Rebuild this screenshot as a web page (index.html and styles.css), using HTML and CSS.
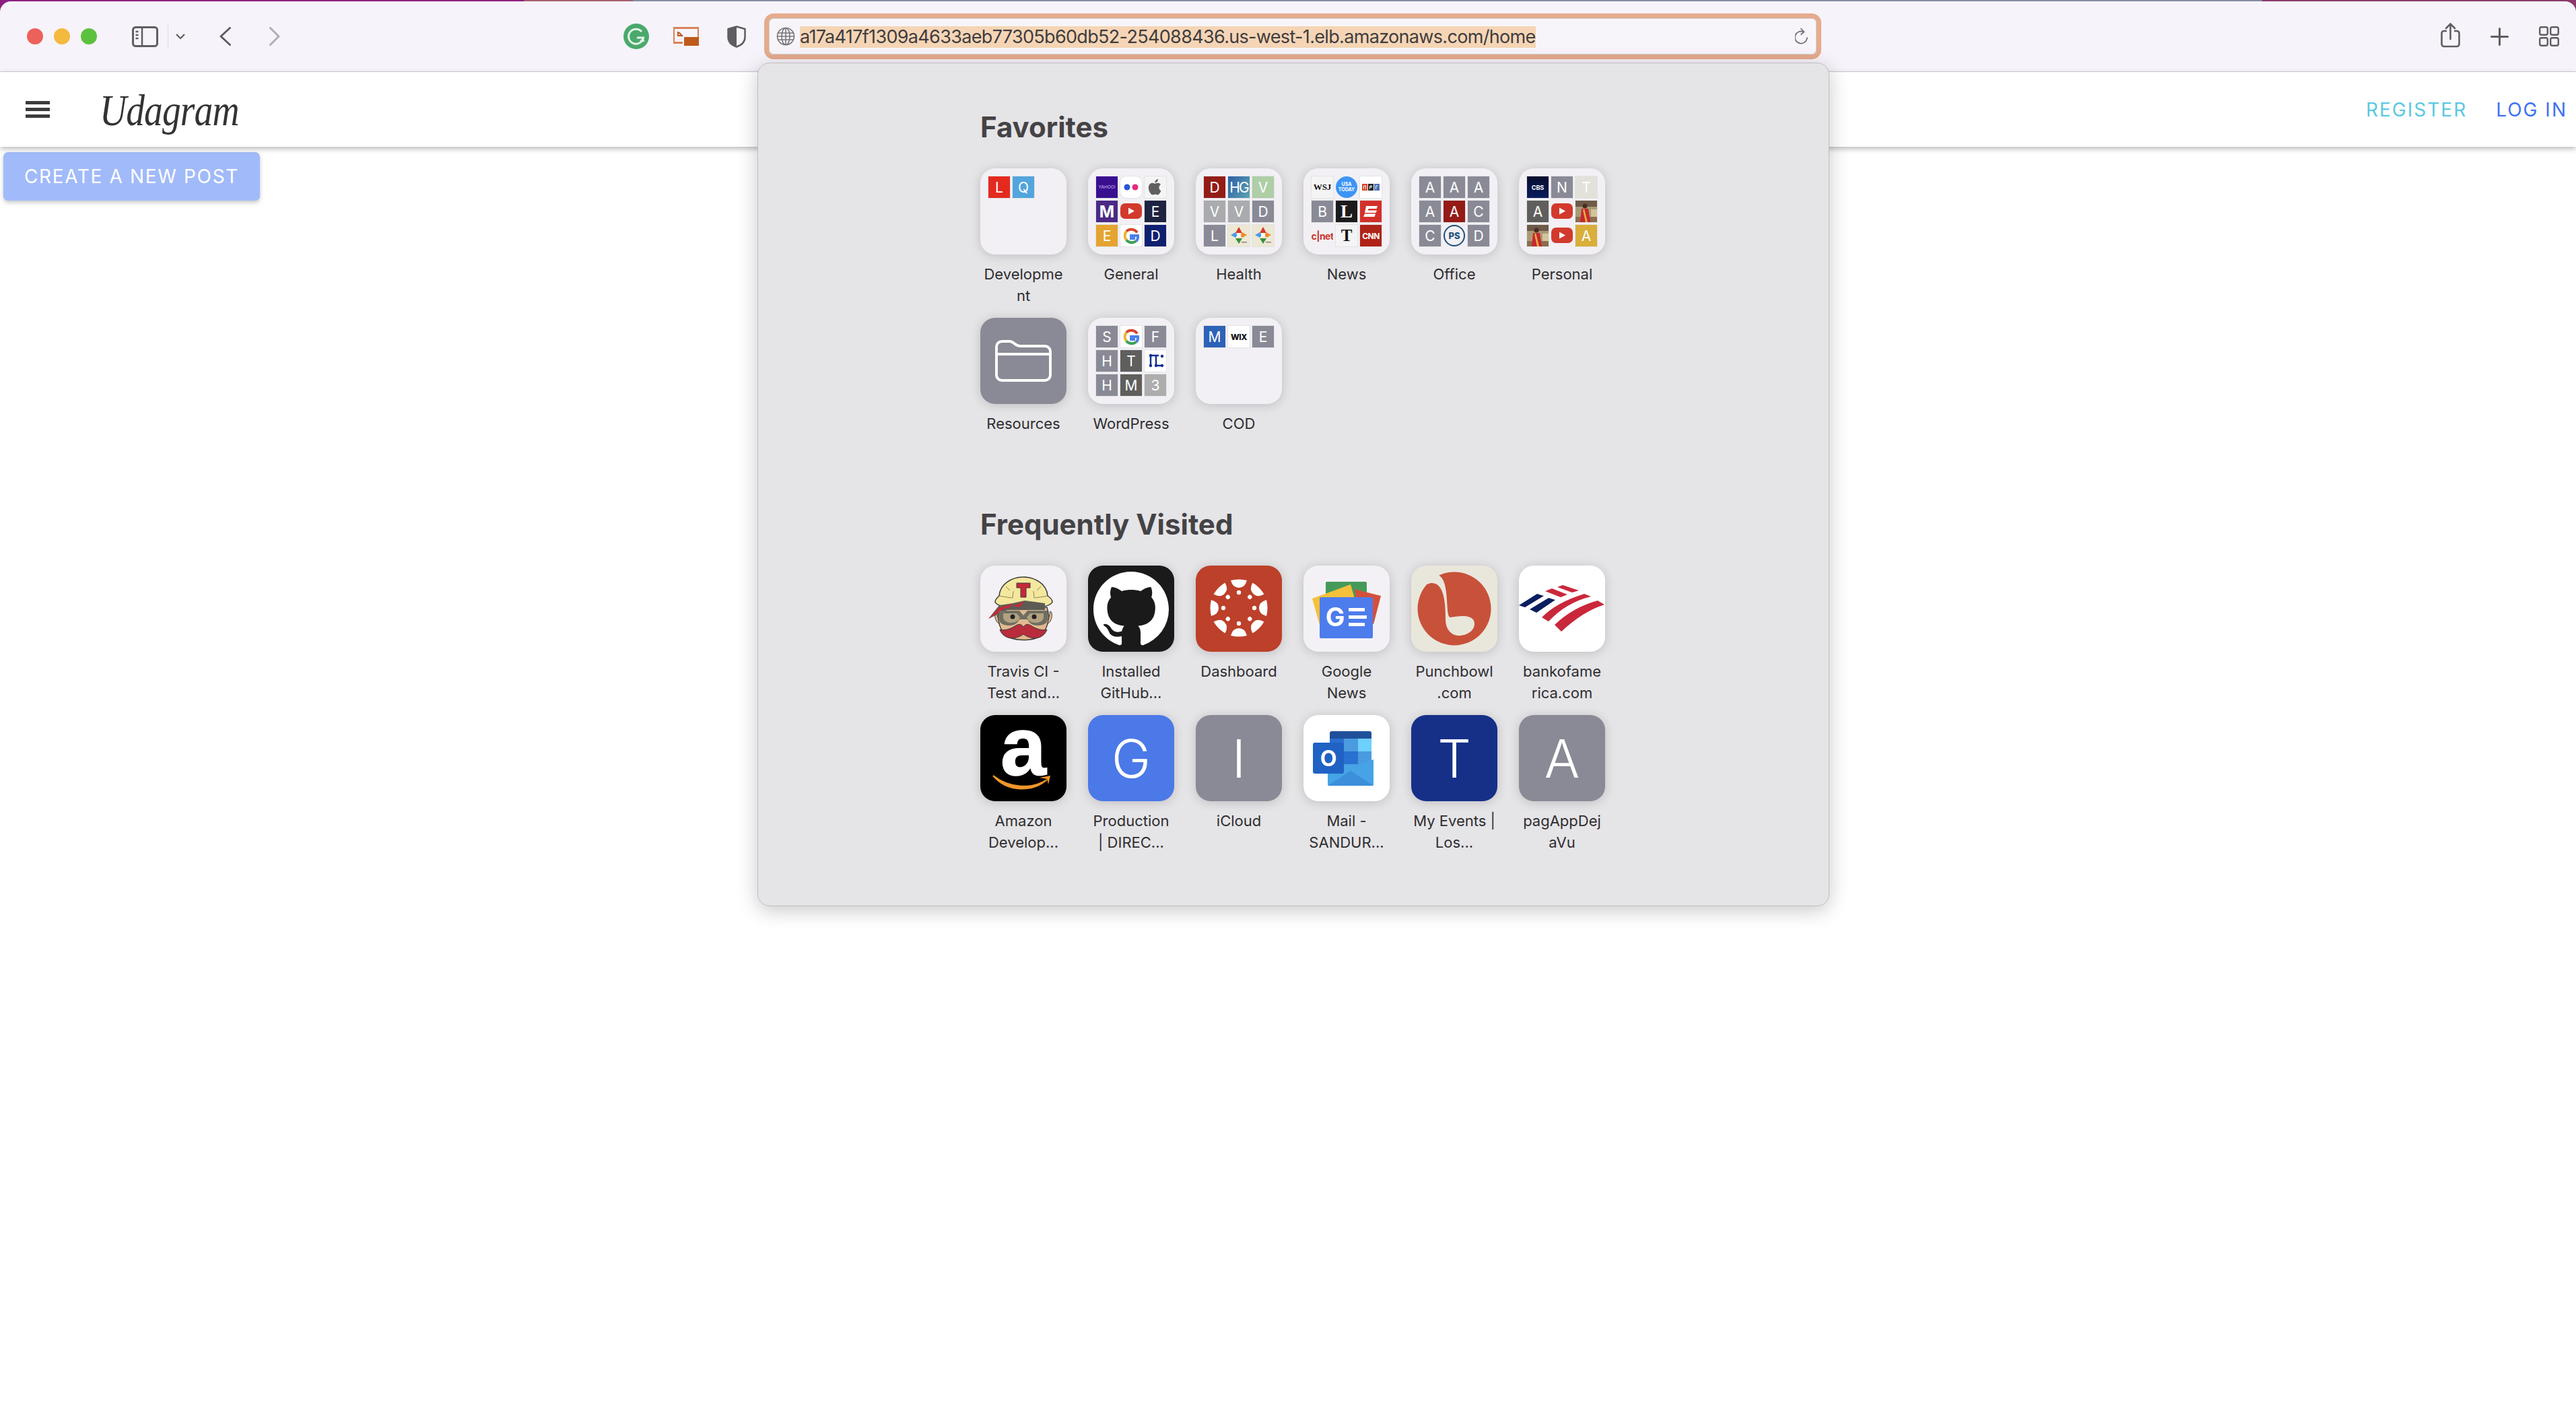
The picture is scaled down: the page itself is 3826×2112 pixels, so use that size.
FILE: index.html
```html
<!DOCTYPE html>
<html lang="en">
<head>
  <meta charset="UTF-8">
  <meta name="viewport" content="width=device-width, initial-scale=1.0">
  <title>Udagram</title>
  <link rel="stylesheet" href="styles.css">
</head>
<body>
  <!-- shared little logos -->
  <svg class="defs" aria-hidden="true">
    <symbol id="yt" viewBox="0 0 32 32"><rect y="4" width="32" height="23" rx="7" fill="#d23a2d"/><path d="M12 10.500l9 5-9 5z" fill="#fff"/></symbol>
    <symbol id="gg" viewBox="0 0 32 32">
      <path d="M25 11.500a10.500 10.500 0 0 0-16-2" fill="none" stroke="#d8432f" stroke-width="4"/>
      <path d="M9 9.500a10.500 10.500 0 0 0 0 13" fill="none" stroke="#eab32d" stroke-width="4"/>
      <path d="M9 22.500a10.500 10.500 0 0 0 14.500 1.500" fill="none" stroke="#3ba056" stroke-width="4"/>
      <path d="M23.500 24c2-1.800 3-4.500 2.500-8h-10v4h6" fill="none" stroke="#4a80ec" stroke-width="4"/>
    </symbol>
    <symbol id="dia" viewBox="0 0 32 32">
      <rect width="32" height="32" fill="#ece8d4"/>
      <path d="M16 3l5 9h-10z" fill="#d8392c"/>
      <path d="M4 15l7-4 3 4-3 4z" fill="#4b9be8"/>
      <path d="M28 15l-7-4-3 4 3 4z" fill="#ee8b2a"/>
      <path d="M11 20h10l-5 8z" fill="#3a8f3c"/>
      <circle cx="16" cy="15" r="3" fill="#fff"/>
      <rect x="20" y="25" width="8" height="1.500" fill="#888"/>
    </symbol>
    <symbol id="photo" viewBox="0 0 32 32">
      <rect width="32" height="32" fill="#a99a78"/>
      <rect width="32" height="9" fill="#6d5a48"/>
      <rect x="23" y="13" width="9" height="12" fill="#d4c49a"/>
      <rect y="24" width="32" height="8" fill="#8b6d4e"/>
      <circle cx="14" cy="8" r="3.500" fill="#4a2c20"/>
      <path d="M9 12h10l3 20h-15z" fill="#c8262d"/>
      <path d="M13 12l5 20h-3l-4-18z" fill="#e6b040"/>
    </symbol>
  </svg>

  <div class="window">
    <div class="toolbar">
      <div class="lights"><span class="light red"></span><span class="light yellow"></span><span class="light green"></span></div>
      <svg class="sidebar-icon" viewBox="0 0 39 31"><rect x="1.500" y="1.500" width="36" height="28" rx="4" fill="none" stroke="#605c62" stroke-width="3"/><path d="M15 2v27" stroke="#605c62" stroke-width="2.500"/><path d="M5.500 8h4M5.500 13h4M5.500 18h4" stroke="#605c62" stroke-width="2.500"/></svg>
      <span class="sep"></span>
      <svg class="caret" viewBox="0 0 14 8"><path d="M1 1l6 6 6-6" fill="none" stroke="#605c62" stroke-width="2.200"/></svg>
      <svg class="back" viewBox="0 0 17 28"><path d="M15.500 1.500L2 14l13.500 12.500" fill="none" stroke="#5f5b62" stroke-width="3" stroke-linecap="round" stroke-linejoin="round"/></svg>
      <svg class="forward" viewBox="0 0 16 28"><path d="M1.500 1.500L14 14 1.500 26.500" fill="none" stroke="#b0adb3" stroke-width="3" stroke-linecap="round" stroke-linejoin="round"/></svg>
      <svg class="grammarly" viewBox="0 0 38 38"><circle cx="19" cy="19" r="19" fill="#4aa96c"/><path d="M27 12a11 11 0 1 0 2.500 9H20" fill="none" stroke="#e6f4ea" stroke-width="3"/><path d="M24 26l5.500-5 2 6z" fill="#e6f4ea"/></svg>
      <svg class="pip" viewBox="0 0 38 28"><path d="M1 23V1.500h36V15" fill="none" stroke="#d9825a" stroke-width="2"/><path d="M0 0h38v3H0zM0 22h14v3H0z" fill="#d9825a"/><path d="M7 7v6h6M8 8l6 6" fill="none" stroke="#c05a1a" stroke-width="2"/><rect x="16" y="15" width="22" height="13" fill="#bf5a1c"/></svg>
      <svg class="shield" viewBox="0 0 28 33"><path d="M14 1.500L26.500 5v12c0 7-5 12-12.500 14.500C6.500 29 1.500 24 1.500 17V5z" fill="#f7f3fa" stroke="#605c62" stroke-width="2.500" stroke-linejoin="round"/><path d="M14 1.500L1.500 5v12c0 7 5 12 12.500 14.500z" fill="#605c62"/></svg>
      <div class="url">
        <svg class="globe" viewBox="0 0 28 28"><g fill="none" stroke="#77747a" stroke-width="1.600"><circle cx="14" cy="14" r="12.500"/><ellipse cx="14" cy="14" rx="6" ry="12.500"/><path d="M14 1.500v25M2.500 9h23M2.500 19h23M1.500 14h25"/></g></svg>
        <span class="url-text">a17a417f1309a4633aeb77305b60db52-254088436.us-west-1.elb.amazonaws.com/home</span>
        <svg class="reload" viewBox="0 0 20 26"><path d="M13 6.500a9 9 0 1 0 5 8" fill="none" stroke="#77747a" stroke-width="1.800"/><path d="M8.500 1l5 5.500-5 4" fill="none" stroke="#77747a" stroke-width="1.800"/></svg>
      </div>
      <div class="toolbar-right">
        <svg class="share" viewBox="0 0 29 37"><path d="M9 12H5a3.500 3.500 0 0 0-3.500 3.500v16A3.500 3.500 0 0 0 5 35h19a3.500 3.500 0 0 0 3.500-3.500v-16A3.500 3.500 0 0 0 24 12h-4" fill="none" stroke="#605c62" stroke-width="2.600"/><path d="M14.500 24V2M8 8l6.500-6.500L21 8" fill="none" stroke="#605c62" stroke-width="2.600" stroke-linecap="round"/></svg>
        <svg class="plus" viewBox="0 0 27 27"><path d="M13.500 1.500v24M1.500 13.500h24" stroke="#605c62" stroke-width="3" stroke-linecap="round"/></svg>
        <svg class="tabs" viewBox="0 0 30 30"><g fill="none" stroke="#605c62" stroke-width="2.400"><rect x="1.200" y="1.200" width="11.600" height="11.600" rx="2.500"/><rect x="17.200" y="1.200" width="11.600" height="11.600" rx="2.500"/><rect x="1.200" y="17.200" width="11.600" height="11.600" rx="2.500"/><rect x="17.200" y="17.200" width="11.600" height="11.600" rx="2.500"/></g></svg>
      </div>
    </div>
  </div>

  <!-- site header -->
  <nav class="site-nav">
    <div class="burger"><span></span><span></span><span></span></div>
    <a class="brand">Udagram</a>
    <div class="nav-links">
      <a class="register">REGISTER</a>
      <a class="login">LOG IN</a>
    </div>
  </nav>
  <button class="create-btn">CREATE A NEW POST</button>

  <!-- favorites dropdown -->
  <div class="popover">
    <h2>Favorites</h2>
    <div class="grid">
      <div class="item">
        <div class="tile folder">
          <span class="mini c-red">L</span><span class="mini c-sky">Q</span>
        </div>
        <p>Developme<br>nt</p>
      </div>
      <div class="item">
        <div class="tile folder">
          <span class="mini c-yahoo yahoo">YAHOO!</span>
          <span class="mini c-white round"><svg viewBox="0 0 32 32"><circle cx="10" cy="16" r="4.500" fill="#2a56d6"/><circle cx="22" cy="16" r="4.500" fill="#e8287f"/></svg></span>
          <span class="mini c-pale"><svg viewBox="0 0 32 32"><path d="M21.500 16.500c0-3 2.400-4.300 2.500-4.400-1.400-2-3.500-2.300-4.200-2.300-1.800-.2-3.500 1-4.400 1-.9 0-2.300-1-3.800-1-2 0-3.800 1.100-4.800 2.900-2 3.600-.5 8.800 1.500 11.700 1 1.400 2.100 3 3.600 2.900 1.400-.1 2-.9 3.700-.9s2.200.9 3.700.9c1.600 0 2.500-1.400 3.500-2.800 1.100-1.600 1.500-3.200 1.600-3.300-.1 0-2.900-1.100-2.900-4.700zM18.700 7.800c.8-1 1.300-2.300 1.200-3.700-1.100 0-2.500.8-3.300 1.700-.7.800-1.400 2.200-1.200 3.500 1.300.1 2.500-.6 3.300-1.500z" fill="#606060"/></svg></span>
          <span class="mini c-violet bold">M</span>
          <span class="mini plain"><svg viewBox="0 0 32 32"><use href="#yt"/></svg></span>
          <span class="mini c-ink">E</span>
          <span class="mini c-amber">E</span>
          <span class="mini c-white"><svg viewBox="0 0 32 32"><use href="#gg"/></svg></span>
          <span class="mini c-navy">D</span>
        </div>
        <p>General</p>
      </div>
      <div class="item">
        <div class="tile folder">
          <span class="mini c-crimson">D</span>
          <span class="mini c-hg hg">HG</span>
          <span class="mini c-sage">V</span>
          <span class="mini c-ash">V</span>
          <span class="mini c-ash">V</span>
          <span class="mini c-grey">D</span>
          <span class="mini c-grey">L</span>
          <span class="mini"><svg viewBox="0 0 32 32"><use href="#dia"/></svg></span>
          <span class="mini"><svg viewBox="0 0 32 32"><use href="#dia"/></svg></span>
        </div>
        <p>Health</p>
      </div>
      <div class="item">
        <div class="tile folder">
          <span class="mini c-pale wsj">WSJ</span>
          <span class="mini plain usa">USA<br>TODAY</span>
          <span class="mini c-white"><svg viewBox="0 0 32 32"><rect x="3" y="11" width="8" height="10" fill="#d8482a"/><rect x="12" y="11" width="8" height="10" fill="#222"/><rect x="21" y="11" width="8" height="10" fill="#4a6fb5"/><path d="M5.500 19v-5h3v5M14.500 19v-5h3v2h-3M23.500 19v-5h3" fill="none" stroke="#fff" stroke-width="1"/></svg></span>
          <span class="mini c-grey">B</span>
          <span class="mini c-black lat">L</span>
          <span class="mini c-espn"><svg viewBox="0 0 32 32"><path d="M9 8h17l-1.500 4H12.500l-1 2.500H25l-1.500 3.500H7zM7 19.500h16L21.500 24H5z" fill="#fff"/></svg></span>
          <span class="mini plain cnet">c|net</span>
          <span class="mini c-pale nyt">T</span>
          <span class="mini c-cnn cnn">CNN</span>
        </div>
        <p>News</p>
      </div>
      <div class="item">
        <div class="tile folder">
          <span class="mini c-grey">A</span><span class="mini c-grey">A</span><span class="mini c-grey">A</span>
          <span class="mini c-grey">A</span><span class="mini c-crimson">A</span><span class="mini c-grey">C</span>
          <span class="mini c-grey">C</span><span class="mini plain ps">PS</span><span class="mini c-grey">D</span>
        </div>
        <p>Office</p>
      </div>
      <div class="item">
        <div class="tile folder">
          <span class="mini c-cbs cbs">CBS</span>
          <span class="mini c-grey">N</span>
          <span class="mini c-bone">T</span>
          <span class="mini c-slate">A</span>
          <span class="mini plain"><svg viewBox="0 0 32 32"><use href="#yt"/></svg></span>
          <span class="mini"><svg viewBox="0 0 32 32"><use href="#photo"/></svg></span>
          <span class="mini"><svg viewBox="0 0 32 32"><use href="#photo"/></svg></span>
          <span class="mini plain"><svg viewBox="0 0 32 32"><use href="#yt"/></svg></span>
          <span class="mini c-gold">A</span>
        </div>
        <p>Personal</p>
      </div>
      <div class="item">
        <div class="tile big c-grey">
          <svg viewBox="0 0 128 128"><path d="M24 85V43a8 8 0 0 1 8-8h12c6 0 7 7 15 7h37a8 8 0 0 1 8 8v35a8 8 0 0 1-8 8H32a8 8 0 0 1-8-8zM24 54h80" fill="none" stroke="#fff" stroke-width="4"/></svg>
        </div>
        <p>Resources</p>
      </div>
      <div class="item">
        <div class="tile folder">
          <span class="mini c-grey">S</span>
          <span class="mini c-white"><svg viewBox="0 0 32 32"><use href="#gg"/></svg></span>
          <span class="mini c-grey">F</span>
          <span class="mini c-grey">H</span>
          <span class="mini c-slate">T</span>
          <span class="mini c-white"><svg viewBox="0 0 32 32"><path d="M9 8v15M9 8h12M17 8v15h10M26 8v.5" fill="none" stroke="#13318f" stroke-width="2.500"/><circle cx="9" cy="8" r="2.200" fill="#13318f"/><circle cx="26" cy="9" r="2.200" fill="#13318f"/><circle cx="9" cy="23" r="2.200" fill="#13318f"/><circle cx="17" cy="23" r="2.200" fill="#13318f"/><circle cx="26" cy="23" r="2.200" fill="#13318f"/></svg></span>
          <span class="mini c-grey">H</span>
          <span class="mini c-slate">M</span>
          <span class="mini c-silver">3</span>
        </div>
        <p>WordPress</p>
      </div>
      <div class="item">
        <div class="tile folder">
          <span class="mini c-cobalt">M</span>
          <span class="mini c-white wix">WIX</span>
          <span class="mini c-grey">E</span>
        </div>
        <p>COD</p>
      </div>
    </div>

    <h2 class="second">Frequently Visited</h2>
    <div class="grid">
      <div class="item">
        <div class="tile big c-frost">
          <svg viewBox="0 0 128 128">
            <path d="M29 62c-6 18 0 35 12 44 14 6 34 6 46 0 12-9 18-26 12-44z" fill="#e2b98f" stroke="#3c3c3c" stroke-width="1.500"/>
            <path d="M24 68c-4 0-3 16 4 18zM104 68c4 0 3 16-4 18z" fill="#e2b98f" stroke="#3c3c3c" stroke-width="1"/>
            <path d="M22 54c0-4 4-7 6-9 1-17 18-28 36-28s35 11 36 28c3 2 7 5 7 9-3 8-26 9-43 9s-39-1-42-9z" fill="#f4e79e" stroke="#3c3c3c" stroke-width="1.500"/>
            <path d="M28 45c10 2 20 3 20 3l1-10M100 45c-10 2-20 3-20 3l-1-10M38 31l6 6M90 31l-6 6" fill="none" stroke="#8a8455" stroke-width="1"/>
            <path d="M54 26h20v7h-6v14h-8V33h-6z" fill="#c5293a" stroke="#3c3c3c" stroke-width="1"/>
            <path d="M12 79l16-20 20-3 18-4 30 4v10H40z" fill="#5c5c55"/>
            <path d="M12 79l16-17 12-2-8 7zM32 62l16-6-6 8zM48 60l18-7-8 9z" fill="#c5293a"/>
            <path d="M28 67h30l6 7 6-7h30v12c0 8-8 10-15 10s-12-3-15-9h-12c-3 6-8 9-15 9s-15-2-15-10z" fill="#6f6e62"/>
            <path d="M34 71h20l5 6c-2 5-7 8-13 8s-12-3-12-8zM94 71H74l-5 6c2 5 7 8 13 8s12-3 12-8z" fill="#b3a180"/>
            <circle cx="48" cy="76" r="3.500" fill="#222"/><circle cx="80" cy="76" r="3.500" fill="#222"/>
            <path d="M29 95c8 2 16-1 24-6 5-3 8-2 11 2 3-4 6-5 11-2 8 5 16 8 24 6-3 10-14 15-24 12-5-1-8-3-11-5-3 2-6 4-11 5-10 3-21-2-24-12z" fill="#b82c3c" stroke="#3c3c3c" stroke-width="1"/>
          </svg>
        </div>
        <p>Travis CI -<br>Test and...</p>
      </div>
      <div class="item">
        <div class="tile big c-gh">
          <svg viewBox="0 0 128 128"><g transform="translate(8 9) scale(7)"><path fill="#fff" d="M8 0C3.580 0 0 3.580 0 8c0 3.540 2.290 6.530 5.470 7.590.400.070.550-.170.550-.380 0-.190-.010-.820-.010-1.490-2.010.370-2.530-.490-2.690-.940-.090-.230-.480-.940-.820-1.130-.280-.150-.680-.520-.010-.530.630-.010 1.080.580 1.230.820.720 1.210 1.870.870 2.330.660.070-.520.280-.870.510-1.070-1.780-.200-3.640-.890-3.640-3.950 0-.870.310-1.590.820-2.150-.080-.200-.360-1.020.080-2.120 0 0 .670-.210 2.200.820.640-.180 1.320-.270 2-.270.680 0 1.360.090 2 .27 1.530-1.040 2.200-.82 2.200-.82.440 1.100.160 1.920.080 2.120.510.560.820 1.270.820 2.150 0 3.070-1.870 3.750-3.650 3.950.290.250.540.730.540 1.480 0 1.070-.010 1.930-.010 2.200 0 .210.150.460.550.380A8.013 8.013 0 0016 8c0-4.420-3.580-8-8-8z"/></g></svg>
        </div>
        <p>Installed<br>GitHub...</p>
      </div>
      <div class="item">
        <div class="tile big c-canvas">
          <svg viewBox="0 0 128 128">
            <defs>
              <g id="petal"><path d="M-12-41Q0-44 12-41Q9-30 0-30Q-9-30-12-41Z" fill="#fff"/><circle cy="-23" r="3.200" fill="#fff"/></g>
            </defs>
            <g transform="translate(64 63)">
              <use href="#petal"/><use href="#petal" transform="rotate(45)"/><use href="#petal" transform="rotate(90)"/><use href="#petal" transform="rotate(135)"/>
              <use href="#petal" transform="rotate(180)"/><use href="#petal" transform="rotate(225)"/><use href="#petal" transform="rotate(270)"/><use href="#petal" transform="rotate(315)"/>
            </g>
          </svg>
        </div>
        <p>Dashboard</p>
      </div>
      <div class="item">
        <div class="tile big c-frost">
          <svg viewBox="0 0 128 128">
            <rect x="33" y="24" width="61" height="30" rx="2" fill="#459a5a"/>
            <path d="M76 35l39 10-11 42-20-5z" fill="#d4503a"/>
            <path d="M13 49l57-21 14 50-57 21z" fill="#f5c03a"/>
            <rect x="24" y="47" width="79" height="61" rx="2" fill="#4d7ced"/>
            <text x="47" y="90" class="gn">G</text>
            <path d="M67 63h24v5H67zM67 74h27v5H67zM67 85h24v5H67z" fill="#fff"/>
          </svg>
        </div>
        <p>Google<br>News</p>
      </div>
      <div class="item">
        <div class="tile big c-cream">
          <svg viewBox="0 0 128 128">
            <circle cx="64" cy="64" r="54.500" fill="#c8513a"/>
            <path d="M40 14c9 4 12 18 13 38 1 14 1 24 5 25 12-2 35-6 36 9 0 12-13 18-23 18-12 0-20-10-20-24 0-20-1-54-20-54-3 0-5 .500-7 2L24 10z" fill="#e9e7db"/>
          </svg>
        </div>
        <p>Punchbowl<br>.com</p>
      </div>
      <div class="item">
        <div class="tile big c-white">
          <svg viewBox="0 0 128 128">
            <path d="M0 59l27-17 10 3-28 17zM16 65l28-17 10 3-28 19z" fill="#0a1f5f"/>
            <path d="M57 32l8-3 24 8-10 3zM39 38l10-4 23 9-10 4zM34 77Q55 55 97 42l10 4Q70 55 44 83zM53 88Q80 62 117 52l10 6Q95 68 63 98z" fill="#c9283a"/>
          </svg>
        </div>
        <p>bankofame<br>rica.com</p>
      </div>
      <div class="item">
        <div class="tile big c-black open">
          <svg viewBox="0 0 128 128">
            <text x="64" y="89" class="amz">a</text>
            <path d="M19 90c26 20 58 20 80 6-20 18-58 20-80-6z" fill="#f0962a" stroke="#f0962a" stroke-width="2"/>
            <path d="M88 93l16-3-3 13c-1-4-1-6-2-8-3-1-7-1-11-2z" fill="#f0962a"/>
          </svg>
        </div>
        <p>Amazon<br>Develop...</p>
      </div>
      <div class="item">
        <div class="tile big letter c-royal">G</div>
        <p>Production<br>| DIREC...</p>
      </div>
      <div class="item">
        <div class="tile big letter c-grey">I</div>
        <p>iCloud</p>
      </div>
      <div class="item">
        <div class="tile big c-white">
          <svg viewBox="0 0 128 128">
            <rect x="39" y="24" width="62" height="14" rx="3" fill="#20509a"/>
            <rect x="39" y="35" width="21" height="19" fill="#2a6fd0"/><rect x="60" y="35" width="21" height="19" fill="#4a9be0"/><rect x="81" y="35" width="20" height="19" fill="#6ed0fd"/>
            <rect x="39" y="54" width="21" height="19" fill="#1f5fb5"/><rect x="60" y="54" width="21" height="19" fill="#2a70d0"/><rect x="81" y="54" width="20" height="19" fill="#4a9ae0"/>
            <path d="M36 73h46l22-7v37a2 2 0 0 1-2 2H38a2 2 0 0 1-2-2z" fill="#46a3e6"/>
            <path d="M36 105l34-22 34 22z" fill="#3b8fdb"/>
            <rect x="14" y="41" width="46" height="46" rx="3" fill="#1f62c4"/>
            <text x="37" y="76" class="ol">O</text>
          </svg>
        </div>
        <p>Mail -<br>SANDUR...</p>
      </div>
      <div class="item">
        <div class="tile big letter c-indigo">T</div>
        <p>My Events |<br>Los...</p>
      </div>
      <div class="item">
        <div class="tile big letter c-grey">A</div>
        <p>pagAppDej<br>aVu</p>
      </div>
    </div>
  </div>
</body>
</html>
```

FILE: styles.css
```css
* {
  box-sizing: border-box;
}

body {
  margin: 0;
  height: 2112px;
  overflow: hidden;
  background-color: #fff;
  font-family: Inter, "Noto Sans", sans-serif;
  position: relative;
}

.defs {
  display: none;
}

/* browser chrome */
.window {
  padding-top: 2px;
  background: linear-gradient(90deg, #8b2080 778px, #a5606f 778px, #a5606f 940px, #8a8ca5 940px, #8a8ca5 3360px, #8a3a6a 3360px);
}

.toolbar {
  height: 105px;
  padding: 0 25px 0 40px;
  display: flex;
  align-items: center;
  background-color: #f7f3fa;
  border-bottom: 1px solid #d5d2d6;
  border-radius: 16px 16px 0 0;
}

.lights {
  display: flex;
  gap: 16px;
}

.light {
  width: 24px;
  height: 24px;
  border-radius: 50%;
}

.red { background-color: #ec6159; }
.yellow { background-color: #f4b93f; }
.green { background-color: #5cc13f; }

.sidebar-icon { width: 39px; height: 31px; margin-left: 52px; }
.sep { width: 1px; height: 36px; margin-left: 14px; background-color: #dedbe0; }
.caret { width: 14px; height: 8px; margin-left: 11px; }
.back { width: 17px; height: 28px; margin-left: 51px; }
.forward { width: 16px; height: 28px; margin-left: 57px; }
.grammarly { width: 38px; height: 38px; margin-left: 510px; }
.pip { width: 38px; height: 28px; margin-left: 36px; }
.shield { width: 28px; height: 33px; margin-left: 42px; }

.url {
  width: 1570px;
  height: 68px;
  margin-left: 27px;
  padding: 0 12px 0 11px;
  display: flex;
  align-items: center;
  background-color: #f8f5fa;
  border: 7px solid #e5ab8d;
  border-radius: 14px;
  box-shadow: inset 0 0 0 1px #cfcdd1;
}

.globe { width: 28px; height: 28px; }

.url-text {
  margin: 2px 0 0 7px;
  height: 32px;
  line-height: 32px;
  font-size: 27px;
  letter-spacing: -0.67px;
  color: #3f3d40;
  background-color: #f5d5b5;
  white-space: nowrap;
}

.reload { width: 20px; height: 26px; margin-left: auto; }

.toolbar-right {
  margin-left: auto;
  display: flex;
  align-items: center;
  gap: 45px;
}

.share { width: 29px; height: 37px; margin-top: -3px; }
.plus { width: 27px; height: 27px; }
.tabs { width: 30px; height: 30px; }

/* site header */
.site-nav {
  height: 111px;
  padding: 0 13px 0 38px;
  display: flex;
  align-items: center;
  position: relative;
  background-color: #fff;
  box-shadow: 0 3px 8px rgba(0, 0, 0, 0.28);
}

.burger {
  width: 36px;
  display: flex;
  flex-direction: column;
  gap: 5.500px;
}

.burger span {
  height: 4.500px;
  background-color: #3c3c3c;
}

.brand {
  margin: 2px 0 0 74px;
  font-family: "Liberation Serif", serif;
  font-style: italic;
  font-size: 66px;
  letter-spacing: -1px;
  color: #333;
  transform: scaleX(0.84);
  transform-origin: left center;
}

.nav-links {
  margin-left: auto;
  display: flex;
  gap: 43px;
}

.nav-links a {
  font-size: 28px;
  letter-spacing: 2px;
}

.register { color: #5bc8e2; }
.login { color: #3e72f4; }

.create-btn {
  display: block;
  width: 381px;
  height: 72px;
  margin: 8px 0 0 5px;
  padding: 0;
  border: none;
  border-radius: 7px;
  background-color: #a1baf9;
  color: #fff;
  font-family: Inter, sans-serif;
  font-size: 28px;
  letter-spacing: 1.650px;
  box-shadow: 0 3px 6px rgba(0, 0, 0, 0.22);
}

/* favorites dropdown */
.popover {
  position: absolute;
  left: 1125px;
  top: 93px;
  width: 1592px;
  height: 1253px;
  padding: 70px 0 0 330px;
  background-color: #e5e4e7;
  border: 1px solid #bfbec2;
  border-radius: 18px;
  box-shadow: 0 6px 30px rgba(0, 0, 0, 0.22);
}

.popover h2 {
  margin: 0 0 36px;
  font-size: 42px;
  line-height: 50px;
  font-weight: 700;
  color: #444345;
}

.popover h2.second {
  margin-top: 92px;
}

.grid {
  display: grid;
  grid-template-columns: repeat(6, 128px);
  grid-auto-rows: 190px;
  gap: 32px;
}

.item p {
  margin: 13px -8px 0;
  font-size: 22px;
  line-height: 32px;
  text-align: center;
  color: #2f2e30;
}

.tile {
  width: 128px;
  height: 128px;
  border-radius: 22px;
  box-shadow: 0 2px 16px rgba(0, 0, 0, 0.17);
  overflow: hidden;
}

.tile svg {
  display: block;
  width: 100%;
  height: 100%;
}

.tile.open,
.tile.open svg {
  overflow: visible;
}

.folder {
  padding: 12px;
  display: grid;
  grid-template-columns: repeat(3, 32px);
  grid-auto-rows: 32px;
  gap: 4px;
  align-content: start;
  background-color: #f2f0f4;
}

.mini {
  display: flex;
  align-items: center;
  justify-content: center;
  text-align: center;
  font-size: 21px;
  color: #fff;
  box-shadow: 0 0 0 1px #e3e2e5;
  overflow: hidden;
}

.mini.plain {
  box-shadow: none;
}

.mini.round {
  border-radius: 9px;
}

.letter {
  display: flex;
  align-items: center;
  justify-content: center;
  font-size: 78px;
  font-weight: 300;
  color: #fff;
}

/* tile colours */
.c-red { background-color: #e42a1f; }
.c-sky { background-color: #52a5dd; }
.c-yahoo { background-color: #3a0f8f; }
.c-white { background-color: #fff; }
.c-pale { background-color: #f4f4f4; }
.c-violet { background-color: #4a2a85; }
.c-ink { background-color: #1d2340; }
.c-amber { background-color: #e5a430; }
.c-navy { background-color: #0f2070; }
.c-crimson { background-color: #941c17; }
.c-hg { background: linear-gradient(120deg, #2f5ea8, #5aa3b0); }
.c-sage { background-color: #aecea6; }
.c-ash { background-color: #a9abae; }
.c-grey { background-color: #8a8a96; }
.c-black { background-color: #000; }
.c-espn { background-color: #d4302b; }
.c-cnn { background-color: #b02318; }
.c-cbs { background: linear-gradient(180deg, #060c2c, #0a1c5e); }
.c-bone { background-color: #e2e2da; }
.c-slate { background-color: #5f5f5d; }
.c-gold { background-color: #d9ae3a; }
.c-silver { background-color: #adadad; }
.c-cobalt { background-color: #2d62b8; }
.c-frost { background-color: #f3f1f5; }
.c-gh { background-color: #1b1a1b; }
.c-canvas { background-color: #bc402a; }
.c-cream { background-color: #e9e7db; }
.c-royal { background-color: #4c79e8; }
.c-indigo { background-color: #163088; }

/* tiny wordmarks inside the tiles */
.yahoo { font-size: 6.500px; color: #cdbff0; }
.bold { font-size: 24px; font-weight: 700; }
.hg { font-size: 21px; letter-spacing: -2px; }
.wsj { font-family: "Liberation Serif", serif; font-size: 13px; font-weight: 700; color: #111; }
.usa { background-color: #3d94f6; border-radius: 50%; font-size: 7px; line-height: 8px; font-weight: 700; }
.lat { background-color: #1b1b1b; font-family: "Liberation Serif", serif; font-size: 27px; font-weight: 700; }
.cnet { font-size: 14px; font-weight: 700; letter-spacing: -0.5px; color: #c8352a; }
.nyt { font-family: "Liberation Serif", serif; font-size: 25px; font-weight: 700; color: #111; }
.cnn { font-size: 12px; font-weight: 700; letter-spacing: -0.5px; }
.ps { border: 2.500px solid #1c4f78; border-radius: 50%; font-size: 13px; font-weight: 800; color: #1c4f78; }
.cbs { font-size: 9px; font-weight: 700; }
.wix { font-size: 12px; font-weight: 800; letter-spacing: -0.5px; color: #111; }

.gn { font-family: Inter, sans-serif; font-size: 38px; font-weight: 700; fill: #fff; text-anchor: middle; }
.amz { font-family: "Liberation Sans", sans-serif; font-size: 122px; font-weight: 700; fill: #fff; stroke: #fff; stroke-width: 1.500px; text-anchor: middle; }
.ol { font-family: Inter, sans-serif; font-size: 32px; font-weight: 700; fill: #fff; text-anchor: middle; }
```
